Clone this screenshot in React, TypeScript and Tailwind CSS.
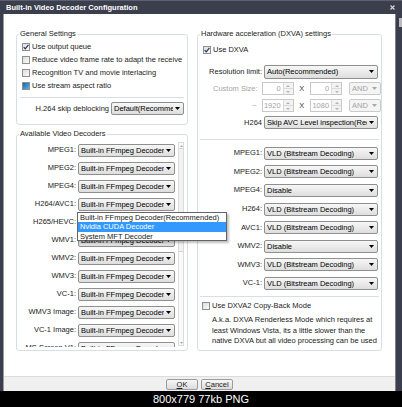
import type { ReactNode } from "react"

type CheckState = "on" | "off" | "mixed"

function Check({ state }: { state: CheckState }) {
  return (
    <span className="w-[8px] h-[8px] shrink-0 border border-[#8e8f8f] bg-linear-to-br from-[#dcdcdc] to-[#fbfbfb] flex items-center justify-center">
      {state === "on" && (
        <svg width="6" height="6" viewBox="0 0 6 6">
          <path d="M0.7 3.1 L2.3 4.9 L5.4 0.9" stroke="#22356c" strokeWidth="1.2" fill="none" />
        </svg>
      )}
      {state === "mixed" && <span className="w-[6px] h-[6px] bg-linear-to-br from-[#1b62a6] to-[#5cb3e8]" />}
    </span>
  )
}

function CheckRow({ state, label, className = "" }: { state: CheckState; label: string; className?: string }) {
  return (
    <div className={`h-[13px] flex items-center gap-[2px] ${className}`}>
      <Check state={state} />
      <span className="whitespace-nowrap">{label}</span>
    </div>
  )
}

function Arrow({ color = "#000" }: { color?: string }) {
  return (
    <svg width="5" height="3" viewBox="0 0 5 3">
      <path d="M0 0 H5 L2.5 3 Z" fill={color} />
    </svg>
  )
}

function Combo({ value, width, disabled = false }: { value: string; width: string; disabled?: boolean }) {
  return (
    <div
      className={`h-[13px] ${width} shrink-0 rounded-[2px] border flex items-center ${
        disabled
          ? "border-[#cacaca] bg-[#f4f4f4] text-[#a3a3a3]"
          : "border-[#8e8f8f] bg-linear-to-b from-[#f7f7f7] to-[#dedede] text-black"
      }`}
    >
      <span className="flex-1 overflow-hidden whitespace-nowrap pl-[2px] leading-[11px]">{value}</span>
      <span className="w-[10px] pr-[1px] flex justify-center">
        <Arrow color={disabled ? "#a8a8a8" : "#000"} />
      </span>
    </div>
  )
}

function Spin({ value }: { value: string }) {
  return (
    <div className="w-[32px] h-[13px] shrink-0 border border-[#c9c9c9] bg-white flex">
      <span className="flex-1 text-right pr-[2px] text-[#a3a3a3] leading-[11px]">{value}</span>
      <span className="w-[10px] flex flex-col border-l border-[#dadada]">
        <span className="flex-1 flex items-center justify-center bg-[#f3f3f3] border-b border-[#dadada]">
          <svg width="4" height="2" viewBox="0 0 4 2">
            <path d="M0 2 H4 L2 0 Z" fill="#b4b4b4" />
          </svg>
        </span>
        <span className="flex-1 flex items-center justify-center bg-[#f3f3f3]">
          <svg width="4" height="2" viewBox="0 0 4 2">
            <path d="M0 0 H4 L2 2 Z" fill="#b4b4b4" />
          </svg>
        </span>
      </span>
    </div>
  )
}

function GroupBox({ title, className, children }: { title: string; className: string; children: ReactNode }) {
  return (
    <div className={`relative border border-[#d5dfe5] rounded-[3px] ${className}`}>
      <span className="absolute left-[2px] -top-[6px] bg-white px-[1px] leading-[10px] whitespace-nowrap">{title}</span>
      {children}
    </div>
  )
}

function Button({ first, rest }: { first: string; rest: string }) {
  return (
    <div className="w-[32px] h-[11px] rounded-[2px] border border-[#9c9c9c] bg-linear-to-b from-[#f7f7f7] to-[#dcdcdc] flex items-center justify-center leading-[9px]">
      <span className="underline underline-offset-[1px]">{first}</span>
      <span>{rest}</span>
    </div>
  )
}

const leftDecoders = [
  "MPEG1:",
  "MPEG2:",
  "MPEG4:",
  "H264/AVC1:",
  "H265/HEVC:",
  "WMV1:",
  "WMV2:",
  "WMV3:",
  "VC-1:",
  "WMV3 Image:",
  "VC-1 Image:",
  "MS Screen V1:",
]

const VLD = "VLD (Bitstream Decoding)"

const rightDecoders = [
  ["MPEG1:", VLD],
  ["MPEG2:", VLD],
  ["MPEG4:", "Disable"],
  ["H264:", VLD],
  ["AVC1:", VLD],
  ["WMV2:", "Disable"],
  ["WMV3:", VLD],
  ["VC-1:", VLD],
]

export default function App() {
  return (
    <div className="w-[402px] h-[407px] bg-black flex flex-col overflow-hidden font-['Liberation_Sans',Arial,sans-serif] text-[7.5px] leading-[10px] text-[#1b1b1b]">
      {/* Window frame */}
      <div className="h-[391px] flex flex-col bg-[#3b3e4c]">
        {/* Title bar */}
        <div className="h-[14px] flex items-center pl-[6px] pr-[7px] border-t border-[#5d606e]">
          <span className="text-white font-bold whitespace-nowrap">Built-in Video Decoder Configuration</span>
          <svg className="ml-auto" width="5" height="5" viewBox="0 0 5 5">
            <path d="M0.5 0.5 L4.5 4.5 M4.5 0.5 L0.5 4.5" stroke="#d8d8de" strokeWidth="1.1" />
          </svg>
        </div>

        <div className="flex-1 flex">
          <div className="w-[4px] border-r border-[#9a9aa0]" />

          {/* Client area */}
          <div className="w-[391px] flex flex-col">
            <div className="flex-1 bg-white flex gap-[9px] pt-[20px] px-[12px]">
              {/* Left column */}
              <div className="w-[172px] flex flex-col gap-[9px]">
                <GroupBox title="General Settings" className="h-[91px]">
                  <div className="pt-[5px] pl-[5px]">
                    <CheckRow state="on" label="Use output queue" />
                    <CheckRow state="off" label="Reduce video frame rate to adapt the receive" />
                    <CheckRow state="off" label="Recognition TV and movie interlacing" />
                    <CheckRow state="mixed" label="Use stream aspect ratio" />
                  </div>
                  <div className="mt-[5px] mx-[3px] h-px bg-[#d5dfe5]" />
                  <div className="mt-[4px] pr-[3px] flex items-center justify-end gap-[2px]">
                    <span className="whitespace-nowrap">H.264 skip deblocking</span>
                    <Combo value="Default(Recommended)" width="w-[73px]" />
                  </div>
                </GroupBox>

                <GroupBox title="Available Video Decoders" className="h-[217px]">
                  <div className="mt-[6px] h-[206px] flex overflow-hidden">
                    <div className="w-[158px] flex flex-col shrink-0">
                      {leftDecoders.map((name) => (
                        <div key={name} className="h-[18px] shrink-0 flex items-center gap-[2px]">
                          <span className="w-[59px] text-right whitespace-nowrap">{name}</span>
                          <Combo value="Built-in FFmpeg Decoder" width="w-[97px]" />
                        </div>
                      ))}
                    </div>
                    <div className="ml-[3px] mt-[1px] w-[6px] h-[204px] border border-[#dcdcdc] bg-[#fafafa] flex flex-col">
                      <div className="h-[5px] flex items-center justify-center">
                        <svg width="3" height="2" viewBox="0 0 3 2">
                          <path d="M0 2 H3 L1.5 0 Z" fill="#a8a8a8" />
                        </svg>
                      </div>
                      <div className="h-[104px] border-y border-[#d2d2d2] bg-[#f2f2f2]" />
                      <div className="flex-1" />
                      <div className="h-[5px] flex items-center justify-center">
                        <svg width="3" height="2" viewBox="0 0 3 2">
                          <path d="M0 0 H3 L1.5 2 Z" fill="#a8a8a8" />
                        </svg>
                      </div>
                    </div>
                  </div>

                  {/* Open dropdown list */}
                  <div className="absolute z-10 left-[60px] top-[77px] w-[150px] h-[29px] bg-white border border-[#646464] shadow-[2px_2px_2px_rgba(0,0,0,0.25)] flex flex-col">
                    <div className="h-[9px] leading-[9px] pl-[2px] whitespace-nowrap">Built-in FFmpeg Decoder(Recommended)</div>
                    <div className="h-[9.5px] leading-[9.5px] pl-[2px] bg-[#3399ff] text-white whitespace-nowrap">Nvidia CUDA Decoder</div>
                    <div className="h-[9px] leading-[9px] pl-[2px] whitespace-nowrap">System MFT Decoder</div>
                  </div>
                </GroupBox>
              </div>

              {/* Right column */}
              <GroupBox title="Hardware acceleration (DXVA) settings" className="w-[185px] h-[317px]">
                <div className="pt-[8px]">
                  <CheckRow state="on" label="Use DXVA" className="pl-[5px]" />
                </div>
                <div className="mt-[7px] flex flex-col">
                  <div className="h-[17px] flex items-center gap-[2px]">
                    <span className="w-[64px] text-right whitespace-nowrap">Resolution limit:</span>
                    <div className="h-[14px] flex">
                      <Combo value="Auto(Recommended)" width="w-[114px] !h-[14px]" />
                    </div>
                  </div>
                  <div className="h-[17px] flex items-center gap-[2px]">
                    <span className="w-[64px] text-right pr-[2px] whitespace-nowrap text-[#a3a3a3]">Custom Size:</span>
                    <Spin value="0" />
                    <span className="w-[13px] text-center text-[#3c3c3c]">X</span>
                    <Spin value="0" />
                    <span className="w-[3px]" />
                    <Combo value="AND" width="w-[32px]" disabled />
                  </div>
                  <div className="h-[17px] flex items-center gap-[2px]">
                    <span className="w-[64px] text-right pr-[3px] text-[#a3a3a3]">~</span>
                    <Spin value="1920" />
                    <span className="w-[13px] text-center text-[#3c3c3c]">X</span>
                    <Spin value="1080" />
                    <span className="w-[3px]" />
                    <Combo value="AND" width="w-[32px]" disabled />
                  </div>
                  <div className="h-[17px] flex items-center gap-[2px]">
                    <span className="w-[64px] text-right whitespace-nowrap">H264</span>
                    <Combo value="Skip AVC Level inspection(Recommended)" width="w-[114px]" />
                  </div>
                </div>

                <div className="mt-[8px] mx-[2px] h-px bg-[#d5dfe5]" />

                <div className="mt-[4px] flex flex-col">
                  {rightDecoders.map(([name, value]) => (
                    <div key={name} className="h-[18.6px] flex items-center gap-[2px]">
                      <span className="w-[64px] text-right whitespace-nowrap">{name}</span>
                      <Combo value={value} width="w-[114px]" />
                    </div>
                  ))}
                </div>

                <div className="mt-[3px] mx-[2px] h-px bg-[#d5dfe5]" />

                <div className="mt-[3px]">
                  <CheckRow state="off" label="Use DXVA2 Copy-Back Mode" className="pl-[4px]" />
                </div>
                <p className="mt-[2px] pl-[14px] leading-[10.8px] whitespace-nowrap">
                  A.k.a. DXVA Renderless Mode which requires at
                  <br />
                  least Windows Vista, its a little slower than the
                  <br />
                  native DXVA but all video processing can be used
                </p>
              </GroupBox>
            </div>

            {/* Button strip */}
            <div className="h-[15px] bg-[#f0f0f0] border-t border-[#dcdcdc] flex items-center justify-center gap-[3px]">
              <Button first="O" rest="K" />
              <Button first="C" rest="ancel" />
            </div>
          </div>

          <div className="flex-1 border-l border-[#7d7f88] flex justify-end">
            <div className="mt-[4px] w-[3px] h-[9px] bg-[#b9b9be]" />
          </div>
        </div>
      </div>

      <div className="h-[16px] flex items-center justify-center text-white text-[11px] leading-[16px]">800x779 77kb PNG</div>
    </div>
  )
}
